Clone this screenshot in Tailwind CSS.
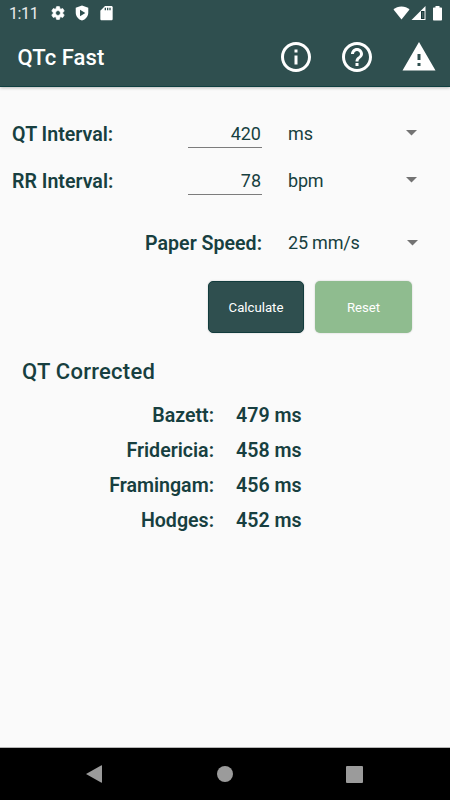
<!DOCTYPE html>
<html lang="en">
<head>
  <meta charset="UTF-8">
  <meta name="viewport" content="width=device-width, initial-scale=1.0">
  <title>QTc Fast</title>
  <script src="https://cdn.jsdelivr.net/npm/@tailwindcss/browser@4"></script>
</head>
<body class="w-[450px] h-[800px] overflow-hidden flex flex-col bg-[#fafafa] text-[#173f40] font-['Roboto',sans-serif]">

  <header class="h-[87px] shrink-0 flex flex-col bg-[#2f4f4f] text-white border-b border-[#0f3f40] shadow-[0_1px_3px_rgba(0,0,0,0.25)]">
    <!-- Status bar -->
    <div class="h-[26px] flex items-center pl-[9px] pr-[8px]">
      <span class="w-[41px] text-[16px] leading-[26px] tracking-[-0.4px] pt-[2px] text-white/90">1:11</span>
      <svg class="w-4 h-4" viewBox="0 0 24 24" fill="currentColor"><path d="M19.140 12.940c.04-.3.06-.61.06-.94 0-.32-.02-.64-.07-.94l2.030-1.580c.18-.14.23-.41.12-.61l-1.920-3.320c-.12-.22-.37-.29-.59-.22l-2.390.96c-.5-.38-1.030-.7-1.620-.94l-.36-2.540c-.04-.24-.24-.41-.48-.41h-3.840c-.24 0-.43.17-.47.41l-.36 2.540c-.59.24-1.130.57-1.620.94l-2.390-.96c-.22-.08-.47 0-.59.22L2.740 8.870c-.12.21-.08.47.12.61l2.030 1.580c-.05.3-.09.63-.09.94s.02.64.07.94l-2.030 1.580c-.18.14-.23.41-.12.61l1.920 3.320c.12.22.37.29.59.22l2.390-.96c.5.38 1.030.7 1.620.94l.36 2.540c.05.24.24.41.48.41h3.840c.24 0 .44-.17.47-.41l.36-2.540c.59-.24 1.130-.56 1.620-.94l2.390.96c.22.08.47 0 .59-.22l1.920-3.320c.12-.22.07-.47-.12-.61l-2.010-1.580zM12 15.600c-1.980 0-3.600-1.620-3.600-3.600s1.620-3.600 3.600-3.600 3.600 1.620 3.600 3.600-1.620 3.600-3.600 3.600z" stroke="currentColor" stroke-width="1"/></svg>
      <svg class="w-4 h-4 ml-2" viewBox="0 0 24 24" fill="currentColor"><path fill-rule="evenodd" d="M12 .8 2.600 4.300v7c0 5.600 4 10.600 9.400 12.100 5.400-1.500 9.400-6.500 9.400-12.100v-7L12 .8zM9 7l8 5-8 5V7z"/></svg>
      <svg class="w-4 h-4 ml-2" viewBox="0 0 24 24" fill="currentColor"><path d="M20 1.500H10.500L3.500 8.500V21c0 1 .8 2 2 2H20c1.200 0 2-1 2-2V3.500c0-1.100-.8-2-2-2z"/><path d="M10 4h2v4h-2zM13.500 4h2v4h-2zM17 4h2v4h-2z" fill="#2f4f4f"/></svg>
      <span class="grow"></span>
      <svg class="w-[17px] h-4" viewBox="0 0 17 16" fill="currentColor"><path d="M8.500 14.500 .5 4.500C2.600 2.700 5.300 1.500 8.500 1.500s5.900 1.200 8 3L8.500 14.500z"/></svg>
      <svg class="w-[15px] h-4 ml-px" viewBox="0 0 15 16"><path d="M.5 15 14.500 1v14z" fill="#fff"/><path d="M10 6h3.500v8h-3.500z" fill="#173536"/><path d="M11.300 7h1v6h-1z" fill="#5a7575"/></svg>
      <svg class="w-[9px] h-4 ml-[7px]" viewBox="0 0 9 16" fill="currentColor"><path d="M2.500 1h4v1.500H8c.6 0 1 .4 1 1V14.500c0 .6-.4 1-1 1H1c-.6 0-1-.4-1-1V3.500c0-.6.4-1 1-1h1.500z"/></svg>
    </div>
    <!-- Toolbar -->
    <div class="grow flex items-center pt-[2px] pl-[17.500px] pr-[13px]">
      <h1 class="text-[22px] leading-[26px] font-medium pt-[2px] tracking-[0.06px]">QTc Fast</h1>
      <div class="ml-auto flex items-center gap-[25.700px]">
        <svg class="w-9 h-9" viewBox="0 0 24 24" fill="currentColor"><path d="M11 7h2v2h-2zm0 4h2v6h-2zm1-9C6.480 2 2 6.480 2 12s4.480 10 10 10 10-4.480 10-10S17.520 2 12 2zm0 18c-4.410 0-8-3.590-8-8s3.590-8 8-8 8 3.590 8 8-3.590 8-8 8z"/></svg>
        <svg class="w-9 h-9" viewBox="0 0 24 24" fill="currentColor"><path d="M11 18h2v-2h-2v2zm1-16C6.480 2 2 6.480 2 12s4.480 10 10 10 10-4.480 10-10S17.520 2 12 2zm0 18c-4.410 0-8-3.590-8-8s3.590-8 8-8 8 3.590 8 8-3.590 8-8 8zm0-14c-2.210 0-4 1.790-4 4h2c0-1.100.9-2 2-2s2 .9 2 2c0 2-3 1.750-3 5h2c0-2.250 3-2.500 3-5 0-2.210-1.790-4-4-4z"/></svg>
        <svg class="w-9 h-9" viewBox="0 0 24 24" fill="currentColor"><path d="M1 21h22L12 2 1 21zm12-3h-2v-2h2v2zm0-4h-2v-4h2v4z"/></svg>
      </div>
    </div>
  </header>

  <main class="grow flex flex-col">
    <!-- Inputs -->
    <div class="flex items-start h-[47px] mt-[31px] pl-3 pr-[33px] text-[18px] leading-[31px]">
      <label class="w-[176px] text-[19.6px] leading-[33px] font-semibold">QT Interval:</label>
      <div class="w-[74px] h-[30px] pr-px text-right border-b border-[#7c7c7c]">420</div>
      <span class="ml-[26px] grow">ms</span>
      <svg class="w-[11px] h-[6px] mt-3" viewBox="0 0 11 6"><path d="M0 0h11L5.500 5.500z" fill="#737373"/></svg>
    </div>
    <div class="flex items-start h-[62px] pl-3 pr-[33px] text-[18px] leading-[31px]">
      <label class="w-[176px] text-[19.6px] leading-[33px] font-semibold">RR Interval:</label>
      <div class="w-[74px] h-[30px] pr-px text-right border-b border-[#7c7c7c]">78</div>
      <span class="ml-[26px] grow tracking-[-0.2px]">bpm</span>
      <svg class="w-[11px] h-[6px] mt-3" viewBox="0 0 11 6"><path d="M0 0h11L5.500 5.500z" fill="#737373"/></svg>
    </div>
    <div class="flex items-start h-[54px] pr-8 text-[18px] leading-[31px]">
      <label class="w-[262px] text-right text-[19.6px] leading-[33px] font-semibold">Paper Speed:</label>
      <span class="ml-[26px] grow tracking-[-0.2px]">25 mm/s</span>
      <svg class="w-[11px] h-[6px] mt-[13px]" viewBox="0 0 11 6"><path d="M0 0h11L5.500 5.500z" fill="#737373"/></svg>
    </div>

    <!-- Actions -->
    <div class="flex justify-end gap-[11px] pr-[38px] text-[13.2px] text-white">
      <button class="w-[96px] h-[52px] pt-[2px] rounded-[5px] bg-[#2f4f4f] border border-[#123c3d] shadow-[0_0_2px_rgba(0,0,0,0.2)]">Calculate</button>
      <button class="w-[97px] h-[52px] pt-[2px] rounded-[5px] bg-[#8fbc8f] shadow-[0_0_2px_rgba(0,0,0,0.2)]">Reset</button>
    </div>

    <!-- Results -->
    <h2 class="mt-6 ml-[22px] text-[22px] leading-[30px] font-medium tracking-[0.25px]">QT Corrected</h2>
    <dl class="mt-[11px] grid grid-cols-[214px_auto] gap-x-[22px] text-[19.6px] leading-[35px] font-semibold">
      <dt class="text-right">Bazett:</dt><dd>479 ms</dd>
      <dt class="text-right">Fridericia:</dt><dd>458 ms</dd>
      <dt class="text-right">Framingam:</dt><dd>456 ms</dd>
      <dt class="text-right">Hodges:</dt><dd>452 ms</dd>
    </dl>
  </main>

  <!-- Navigation bar -->
  <nav class="h-[53px] shrink-0 flex items-center justify-between pl-[86px] pr-[87px] bg-black border-t border-[#b5b5b5]">
    <svg class="w-[17px] h-[18px]" viewBox="0 0 17 18"><path d="M0 9 15.500 .300Q16 0 16 1v16q0 1-.500 .700z" fill="#9b9b9b"/></svg>
    <span class="w-4 h-4 rounded-full bg-[#9b9b9b]"></span>
    <span class="w-[17px] h-[17px] rounded-[1px] bg-[#9b9b9b]"></span>
  </nav>
</body>
</html>
